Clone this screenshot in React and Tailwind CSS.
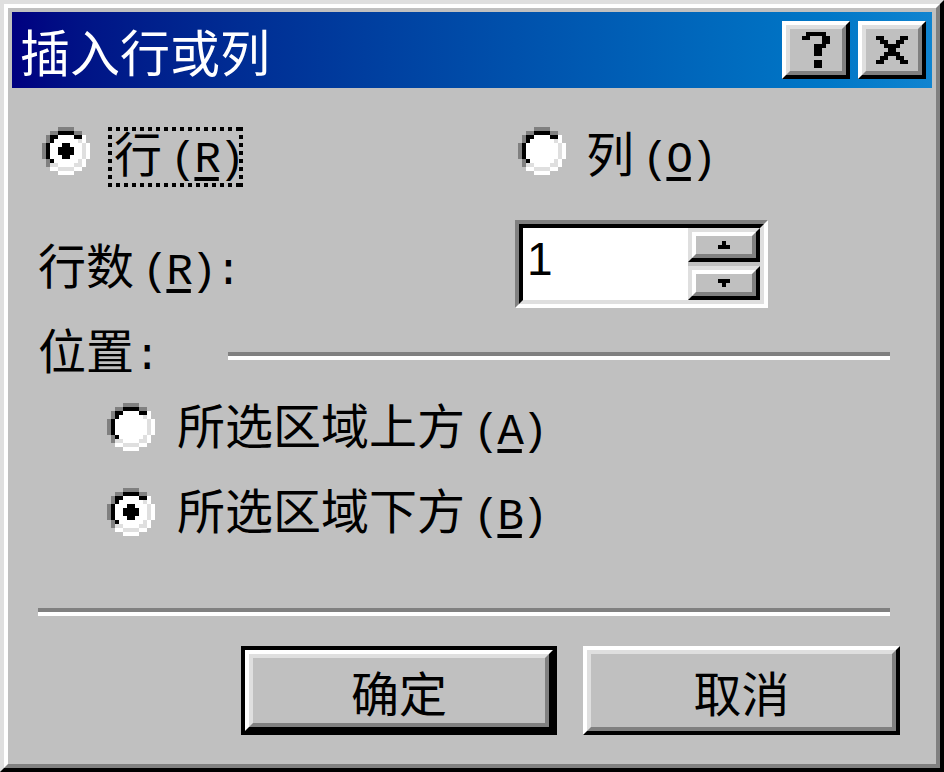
import React from "react";

function Radio({ checked }) {
  return (
    <svg width="48" height="48" viewBox="0 0 12 12" shapeRendering="crispEdges" className="shrink-0 block">
      <path fill="#808080" d="M4 0h4v1H4z M2 1h2v1H2z M8 1h2v1H8z M1 2h1v2H1z M0 4h1v4H0z M1 8h1v2H1z" />
      <path fill="#ffffff" d="M10 2h1v2h-1z M11 4h1v4h-1z M10 8h1v2h-1z M2 10h2v1H2z M8 10h2v1H8z M4 11h4v1H4z" />
      <path fill="#000000" d="M4 1h4v1H4z M2 2h2v1H2z M8 2h2v1H8z M2 3h1v1H2z M1 4h1v4H1z M2 8h1v1H2z" />
      <path fill="#dfdfdf" d="M9 3h1v1H9z M10 4h1v4h-1z M9 8h1v1H9z M2 9h2v1H2z M8 9h2v1H8z M4 10h4v1H4z" />
      <path fill="#ffffff" d="M4 2h4v1H4z M3 3h6v1H3z M2 4h8v4H2z M3 8h6v1H3z M4 9h4v1H4z" />
      {checked && <path fill="#000000" d="M5 4h2v1H5z M4 5h4v2H4z M5 7h2v1H5z" />}
    </svg>
  );
}

function Lbl({ zh, k, colon }) {
  return (
    <span className="flex items-baseline leading-[48px] text-black whitespace-nowrap">
      <span className="font-['Noto_Sans_CJK_SC',sans-serif] text-[48px]">{zh}</span>
      <span className="ml-[8px] font-['Liberation_Mono',monospace] text-[44px] tracking-[-2px]">
        (<span className="underline decoration-4 underline-offset-[5px]">{k}</span>){colon ? ":" : ""}
      </span>
    </span>
  );
}

function TitleBtn({ children }) {
  return (
    <div className="w-[68px] h-[58px] border-4 border-t-white border-l-white border-r-black border-b-black">
      <div className="w-full h-full border-4 border-t-[#dfdfdf] border-l-[#dfdfdf] border-r-[#808080] border-b-[#808080] bg-[#c0c0c0] flex items-center justify-center">
        {children}
      </div>
    </div>
  );
}

function SpinBtn({ up }) {
  return (
    <div className="h-[34px] border-4 border-t-[#dfdfdf] border-l-[#dfdfdf] border-r-black border-b-black">
      <div className="w-full h-full border-4 border-t-white border-l-white border-r-[#808080] border-b-[#808080] bg-[#c0c0c0] flex items-center justify-center">
        <svg width="12" height="8" viewBox="0 0 3 2" shapeRendering="crispEdges" className="block">
          {up ? (
            <path fill="#000" d="M1 0h1v1H1z M0 1h3v1H0z" />
          ) : (
            <path fill="#000" d="M0 0h3v1H0z M1 1h1v1H1z" />
          )}
        </svg>
      </div>
    </div>
  );
}

function PushBtn({ label, isDefault, w }) {
  const inner = (
    <div className="w-full h-full border-4 border-t-white border-l-white border-r-black border-b-black">
      <div className="w-full h-full border-4 border-t-[#dfdfdf] border-l-[#dfdfdf] border-r-[#808080] border-b-[#808080] bg-[#c0c0c0] flex items-center justify-center">
        <span className="font-['Noto_Sans_CJK_SC',sans-serif] text-[48px] leading-[48px] text-black">{label}</span>
      </div>
    </div>
  );
  return isDefault ? (
    <div className={`${w} h-[89px] border-4 border-black`}>{inner}</div>
  ) : (
    <div className={`${w} h-[89px]`}>{inner}</div>
  );
}

export default function App() {
  return (
    <div className="w-[944px] h-[772px] border-4 border-t-[#dfdfdf] border-l-[#dfdfdf] border-r-black border-b-black">
      <div className="w-full h-full border-4 border-t-white border-l-white border-r-[#808080] border-b-[#808080] bg-[#c0c0c0] p-[4px] flex flex-col">
        {/* Title bar */}
        <div className="h-[76px] shrink-0 flex items-center bg-gradient-to-r from-[#000080] to-[#1084d0] pl-[8px] pr-[6px]">
          <span className="font-['Noto_Sans_CJK_SC',sans-serif] text-[50px] leading-[50px] text-white">插入行或列</span>
          <div className="ml-auto flex gap-[8px]">
            <TitleBtn>
              <svg width="28" height="36" viewBox="0 0 7 9" shapeRendering="crispEdges" className="block">
                <path fill="#000" d="M1 0h5v1H1z M0 1h2v1H0z M5 1h2v2H5z M3 3h3v1H3z M3 4h2v2H3z M3 7h2v2H3z" />
              </svg>
            </TitleBtn>
            <TitleBtn>
              <svg width="34" height="28" viewBox="0 0 8 7" shapeRendering="crispEdges" className="block">
                <path fill="#000" d="M0 0h2v1H0z M6 0h2v1H6z M1 1h2v1H1z M5 1h2v1H5z M2 2h4v1H2z M3 3h2v1H3z M2 4h4v1H2z M1 5h2v1H1z M5 5h2v1H5z M0 6h2v1H0z M6 6h2v1H6z" />
              </svg>
            </TitleBtn>
          </div>
        </div>

        {/* Body */}
        <div className="flex-1 flex flex-col">
          {/* Row 1: row / column radios */}
          <div className="mt-[39px] h-[60px] flex items-start">
            <div className="ml-[30px] w-[476px] flex items-start gap-[18px]">
              <Radio checked />
              <div className="relative w-[135px] h-[60px] pl-[6px]">
                <Lbl zh="行" k="R" />
                <div className="absolute top-0 left-0 right-0 h-[4px] bg-[repeating-linear-gradient(90deg,#000_0_4px,transparent_4px_8px)]" />
                <div className="absolute bottom-0 left-0 right-0 h-[4px] bg-[repeating-linear-gradient(90deg,#000_0_4px,transparent_4px_8px)]" />
                <div className="absolute top-0 bottom-0 left-0 w-[4px] bg-[repeating-linear-gradient(180deg,#000_0_4px,transparent_4px_8px)]" />
                <div className="absolute top-0 bottom-0 right-0 w-[4px] bg-[repeating-linear-gradient(180deg,#000_0_4px,transparent_4px_8px)]" />
              </div>
            </div>
            <div className="flex items-start gap-[20px]">
              <Radio />
              <Lbl zh="列" k="O" />
            </div>
          </div>

          {/* Row 2: count with spinner */}
          <div className="mt-[33px] h-[88px] flex items-center">
            <div className="w-[503px] pl-[26px] pt-[6px]">
              <Lbl zh="行数" k="R" colon />
            </div>
            <div className="w-[253px] h-[88px] border-4 border-t-[#808080] border-l-[#808080] border-r-white border-b-white">
              <div className="w-full h-full border-4 border-t-black border-l-black border-r-[#dfdfdf] border-b-[#dfdfdf] bg-white flex">
                <div className="flex-1 pl-[4px] pt-[8px]">
                  <span className="font-['Liberation_Sans',sans-serif] text-[46px] leading-[46px] text-black">1</span>
                </div>
                <div className="w-[72px] flex flex-col bg-[#c0c0c0]">
                  <SpinBtn up />
                  <div className="h-[4px]" />
                  <SpinBtn />
                </div>
              </div>
            </div>
          </div>

          {/* Row 3: position group label */}
          <div className="mt-[20px] h-[48px] flex items-center">
            <div className="w-[190px] ml-[26px] flex items-baseline leading-[48px] text-black">
              <span className="font-['Noto_Sans_CJK_SC',sans-serif] text-[48px]">位置</span>
              <span className="font-['Liberation_Mono',monospace] text-[44px]">:</span>
            </div>
            <div className="w-[662px] h-[8px] mt-[8px] border-t-4 border-b-4 border-t-[#808080] border-b-white" />
          </div>

          {/* Row 4 */}
          <div className="mt-[23px] h-[56px] flex items-center ml-[95px] gap-[22px]">
            <Radio />
            <Lbl zh="所选区域上方" k="A" />
          </div>

          {/* Row 5 */}
          <div className="mt-[29px] h-[56px] flex items-center ml-[95px] gap-[22px]">
            <Radio checked />
            <Lbl zh="所选区域下方" k="B" />
          </div>

          {/* Separator */}
          <div className="mt-[68px] ml-[26px] w-[852px] h-[8px] border-t-4 border-b-4 border-t-[#808080] border-b-white" />

          {/* Buttons */}
          <div className="mt-[30px] ml-[229px] flex gap-[26px]">
            <PushBtn label="确定" isDefault w="w-[316px]" />
            <PushBtn label="取消" w="w-[317px]" />
          </div>
        </div>
      </div>
    </div>
  );
}
